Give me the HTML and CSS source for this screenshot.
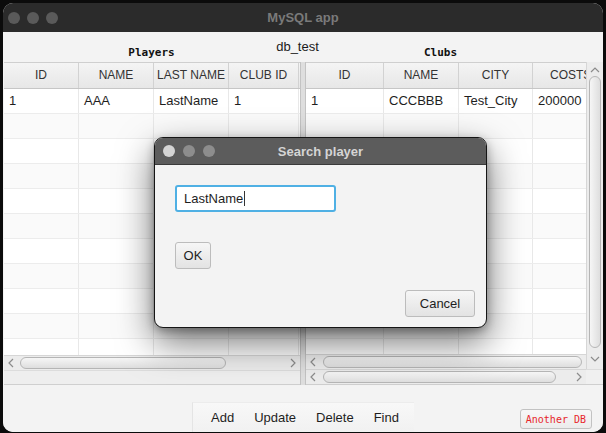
FILE: index.html
```html
<!DOCTYPE html>
<html>
<head>
<meta charset="utf-8">
<link rel="stylesheet" href="styles.css">
</head>
<body>
<div class="window">
  <div class="titlebar">
    <div class="lights"><span></span><span></span><span></span></div>
    <div class="title">MySQL app</div>
    <div></div>
  </div>
  <div class="content">
    <div class="labels">
      <div class="db">db_test</div>
      <div class="lbl lbl-left">Players</div>
      <div class="lbl lbl-right">Clubs</div>
    </div>
    <div class="split">
      <div class="pane-left">
        <div class="table t-left">
          <div class="row head"><div class="c">ID</div><div class="c">NAME</div><div class="c">LAST NAME</div><div class="c">CLUB ID</div></div>
          <div class="row"><div class="c">1</div><div class="c">AAA</div><div class="c">LastName</div><div class="c">1</div></div>
          <div class="row alt"><div class="c"></div><div class="c"></div><div class="c"></div><div class="c"></div></div>
          <div class="row"><div class="c"></div><div class="c"></div><div class="c"></div><div class="c"></div></div>
          <div class="row alt"><div class="c"></div><div class="c"></div><div class="c"></div><div class="c"></div></div>
          <div class="row"><div class="c"></div><div class="c"></div><div class="c"></div><div class="c"></div></div>
          <div class="row alt"><div class="c"></div><div class="c"></div><div class="c"></div><div class="c"></div></div>
          <div class="row"><div class="c"></div><div class="c"></div><div class="c"></div><div class="c"></div></div>
          <div class="row alt"><div class="c"></div><div class="c"></div><div class="c"></div><div class="c"></div></div>
          <div class="row"><div class="c"></div><div class="c"></div><div class="c"></div><div class="c"></div></div>
          <div class="row alt"><div class="c"></div><div class="c"></div><div class="c"></div><div class="c"></div></div>
          <div class="row"><div class="c"></div><div class="c"></div><div class="c"></div><div class="c"></div></div>
        </div>
        <div class="hscroll">
          <div class="arrow"><svg width="6" height="10" viewBox="0 0 6 10"><polyline points="5,1 1,5 5,9"/></svg></div>
          <div class="thumb thumb-l1"></div>
          <div class="spacer"></div>
          <div class="arrow"><svg width="6" height="10" viewBox="0 0 6 10"><polyline points="1,1 5,5 1,9"/></svg></div>
        </div>
        <div class="band"></div>
      </div>
      <div class="divider"></div>
      <div class="pane-right">
        <div class="right-top">
          <div class="right-main">
            <div class="table t-right">
              <div class="row head"><div class="c">ID</div><div class="c">NAME</div><div class="c">CITY</div><div class="c">COSTS</div></div>
              <div class="row"><div class="c">1</div><div class="c">CCCBBB</div><div class="c">Test_City</div><div class="c">200000</div></div>
              <div class="row alt"><div class="c"></div><div class="c"></div><div class="c"></div><div class="c"></div></div>
              <div class="row"><div class="c"></div><div class="c"></div><div class="c"></div><div class="c"></div></div>
              <div class="row alt"><div class="c"></div><div class="c"></div><div class="c"></div><div class="c"></div></div>
              <div class="row"><div class="c"></div><div class="c"></div><div class="c"></div><div class="c"></div></div>
              <div class="row alt"><div class="c"></div><div class="c"></div><div class="c"></div><div class="c"></div></div>
              <div class="row"><div class="c"></div><div class="c"></div><div class="c"></div><div class="c"></div></div>
              <div class="row alt"><div class="c"></div><div class="c"></div><div class="c"></div><div class="c"></div></div>
              <div class="row"><div class="c"></div><div class="c"></div><div class="c"></div><div class="c"></div></div>
              <div class="row alt"><div class="c"></div><div class="c"></div><div class="c"></div><div class="c"></div></div>
              <div class="row"><div class="c"></div><div class="c"></div><div class="c"></div><div class="c"></div></div>
            </div>
            <div class="hscroll">
              <div class="arrow"><svg width="6" height="10" viewBox="0 0 6 10"><polyline points="5,1 1,5 5,9"/></svg></div>
              <div class="thumb thumb-r1"></div>
            </div>
          </div>
          <div class="vscroll">
            <div class="varrow"><svg width="10" height="6" viewBox="0 0 10 6"><polyline points="1,5 5,1 9,5"/></svg></div>
            <div class="vthumb"></div>
            <div class="varrow"><svg width="10" height="6" viewBox="0 0 10 6"><polyline points="1,1 5,5 9,1"/></svg></div>
          </div>
        </div>
        <div class="right-bottom">
          <div class="hscroll hscroll-2">
            <div class="arrow"><svg width="6" height="10" viewBox="0 0 6 10"><polyline points="5,1 1,5 5,9"/></svg></div>
            <div class="thumb thumb-r2"></div>
            <div class="spacer"></div>
            <div class="arrow"><svg width="6" height="10" viewBox="0 0 6 10"><polyline points="1,1 5,5 1,9"/></svg></div>
          </div>
          <div class="corner"></div>
        </div>
      </div>
    </div>
    <div class="bottom">
      <div></div>
      <div class="toolbar">
        <button class="tb">Add</button>
        <button class="tb">Update</button>
        <button class="tb">Delete</button>
        <button class="tb">Find</button>
      </div>
      <div class="other"><button class="another">Another DB</button></div>
    </div>
  </div>
</div>

<div class="dialog">
  <div class="dtitle">
    <div class="dlights"><span class="on"></span><span></span><span></span></div>
    <div class="dtext">Search player</div>
    <div></div>
  </div>
  <div class="dbody">
    <div class="field"><span>LastName</span><i class="caret"></i></div>
    <button class="btn ok">OK</button>
    <button class="btn cancel">Cancel</button>
  </div>
</div>
</body>
</html>
```

FILE: styles.css
```css
* { box-sizing: border-box; }
html, body { margin: 0; padding: 0; }
body {
  width: 606px;
  height: 433px;
  overflow: hidden;
  background: #0b0b0b;
  font-family: "Liberation Sans", Arial, sans-serif;
  position: relative;
}
.window {
  margin: 3px 3px 1px 3px;
  width: 600px;
  height: 429px;
  border-radius: 10px;
  overflow: hidden;
  display: flex;
  flex-direction: column;
  background: #f3f3f3;
}
.titlebar {
  height: 29px;
  flex: none;
  background: #2b2b2b;
  display: grid;
  grid-template-columns: 1fr auto 1fr;
  align-items: center;
}
.lights { display: flex; gap: 7px; padding-left: 5px; }
.lights span { width: 12px; height: 12px; border-radius: 50%; background: #5a5a5a; }
.title { color: #7a7a7a; font-weight: bold; font-size: 13px; }

.content { flex: 1; display: flex; flex-direction: column; min-height: 0; }

.labels {
  height: 30px;
  flex: none;
  display: grid;
  grid-template-columns: 297px 6px minmax(0, 1fr);
  grid-template-rows: 30px;
}
.db {
  grid-column: 1 / 4;
  grid-row: 1;
  justify-self: center;
  align-self: start;
  margin-top: 7px;
  padding-right: 11px;
  font-size: 13px;
  color: #1a1a1a;
}
.lbl {
  grid-row: 1;
  align-self: end;
  margin-bottom: 3px;
  font-family: "DejaVu Sans Mono", monospace;
  font-weight: bold;
  font-size: 11px;
  color: #111;
  text-align: center;
}
.lbl-left { grid-column: 1; }
.lbl-right { grid-column: 3; padding-right: 28px; }

.split {
  height: 323px;
  flex: none;
  display: grid;
  grid-template-columns: 297px 6px minmax(0, 1fr);
}
.pane-left { display: flex; flex-direction: column; padding-left: 1px; min-height: 0; min-width: 0; }
.table { flex: 1; overflow: hidden; background: #fff; min-height: 0; }
.row { display: flex; height: 25px; border-bottom: 1px solid #ececec; }
.row.alt { background: #fafafa; }
.row .c {
  flex: none;
  border-right: 1px solid #e8e8e8;
  font-size: 13px;
  color: #1e1e1e;
  padding-left: 5px;
  line-height: 24px;
  white-space: nowrap;
  overflow: hidden;
}
.row.head {
  height: 27px;
  background: linear-gradient(#f4f4f4, #e7e7e7);
  border-top: 1px solid #cfcfcf;
  border-bottom: 1px solid #c6c6c6;
}
.row.head .c {
  font-size: 12px;
  color: #333;
  text-align: center;
  padding-left: 0;
  line-height: 25px;
  border-right: 1px solid #d2d2d2;
}
.t-left .c:nth-child(1), .t-left .c:nth-child(2), .t-left .c:nth-child(3) { width: 75px; }
.t-left .c:nth-child(4) { width: 70px; }
.t-right .c:nth-child(1) { width: 78px; }
.t-right .c:nth-child(2) { width: 75px; }
.t-right .c:nth-child(3) { width: 74px; }
.t-right .c:nth-child(4) { width: 75px; }
.t-right .row.head .c:nth-child(4) { text-align: left; padding-left: 17px; }

.hscroll {
  height: 15px;
  flex: none;
  background: #ececec;
  border-top: 1px solid #d6d6d6;
  display: flex;
  align-items: center;
}
.arrow { width: 14px; height: 14px; display: flex; align-items: center; justify-content: center; flex: none; }
.arrow svg polyline, .varrow svg polyline { fill: none; stroke: #8c8c8c; stroke-width: 1.2; }
.thumb {
  height: 12px;
  border: 1px solid #b5b5b5;
  border-radius: 6px;
  background: linear-gradient(#f6f6f6, #dedede);
  flex: none;
}
.thumb-l1 { width: 206px; margin-left: 2px; }
.thumb-r1 { width: 259px; margin-left: 3px; }
.thumb-r2 { width: 233px; margin-left: 3px; }
.spacer { flex: 1; }
.band { height: 15px; flex: none; background: #eeeeee; border-top: 1px solid #dcdcdc; border-bottom: 1px solid #cfcfcf; }

.divider {
  background: #dedede;
  border-left: 1px solid #c3c3c3;
  border-right: 1px solid #c3c3c3;
}
.pane-right { display: flex; flex-direction: column; min-height: 0; min-width: 0; }
.right-top { flex: 1; display: flex; min-height: 0; }
.right-main { flex: 1; display: flex; flex-direction: column; min-width: 0; }
.vscroll {
  width: 17px;
  flex: none;
  background: #ececec;
  border-left: 1px solid #d6d6d6;
  display: flex;
  flex-direction: column;
  align-items: center;
}
.varrow { height: 12px; width: 14px; display: flex; align-items: center; justify-content: center; flex: none; }
.varrow:first-child { margin-top: 2px; }
.varrow:last-child { margin-bottom: 4px; }
.vthumb {
  flex: 1;
  width: 12px;
  margin: 0 0 5px 0;
  border: 1px solid #b5b5b5;
  border-radius: 6px;
  background: linear-gradient(90deg, #f6f6f6, #dedede);
}
.right-bottom { height: 16px; flex: none; display: flex; border-bottom: 1px solid #cfcfcf; }
.right-bottom .hscroll { flex: 1; height: 15px; }
.corner { width: 17px; background: #f0f0f0; border-top: 1px solid #dcdcdc; }

.bottom {
  flex: 1;
  display: grid;
  grid-template-columns: 1fr auto 1fr;
  align-items: end;
  background: #f3f3f3;
}
.toolbar {
  height: 30px;
  display: flex;
  align-items: center;
  padding: 0 5px 0 8px;
  background: linear-gradient(#f8f8f8, #f1f1f1);
  border-left: 1px solid #e4e4e4;
  border-top: 1px solid #ececec;
}
.tb {
  border: none;
  background: transparent;
  font-family: "Liberation Sans", Arial, sans-serif;
  font-size: 13px;
  color: #1e1e1e;
  padding: 0 10px;
  height: 30px;
}
.other { justify-self: end; padding: 0 11px 3px 0; }
.another {
  height: 20px;
  padding: 0 5px;
  border: 1px solid #c2c2c2;
  border-radius: 3px;
  background: linear-gradient(#f7f7f7, #ececec);
  color: #e8262c;
  font-family: "DejaVu Sans Mono", monospace;
  font-size: 10px;
}

.dialog {
  position: absolute;
  left: 154px;
  top: 137px;
  width: 333px;
  height: 191px;
  border: 1px solid #151515;
  border-radius: 9px;
  overflow: hidden;
  background: #f3f3f3;
  box-shadow: 0 14px 36px rgba(0,0,0,0.55), 0 3px 10px rgba(0,0,0,0.3);
  display: flex;
  flex-direction: column;
}
.dtitle {
  height: 27px;
  flex: none;
  background: #5c5c5c;
  display: grid;
  grid-template-columns: 1fr auto 1fr;
  align-items: center;
  border-bottom: 1px solid #3a3a3a;
}
.dlights { display: flex; gap: 8px; padding-left: 8px; }
.dlights span { width: 12px; height: 12px; border-radius: 50%; background: #8d8d8d; }
.dlights span.on { background: #d4d4d4; }
.dtext { color: #d4d4d4; font-weight: bold; font-size: 13px; }
.dbody {
  flex: 1;
  display: flex;
  flex-direction: column;
  align-items: flex-start;
  padding: 20px 11px 10px 20px;
}
.field {
  width: 161px;
  height: 27px;
  border: 2px solid #4fb0e4;
  border-radius: 3px;
  background: #fff;
  display: flex;
  align-items: center;
  padding-left: 7px;
  font-size: 13px;
  color: #1e1e1e;
}
.caret { display: block; width: 1px; height: 15px; background: #333; margin-left: 1px; }
.btn {
  height: 27px;
  border: 1px solid #bcbcbc;
  border-radius: 3px;
  background: linear-gradient(#f6f6f6, #e3e3e3);
  font-family: "Liberation Sans", Arial, sans-serif;
  font-size: 13px;
  color: #1e1e1e;
  padding: 0;
}
.ok { width: 36px; margin-top: 30px; }
.cancel { width: 70px; margin-top: 21px; align-self: flex-end; }
```
